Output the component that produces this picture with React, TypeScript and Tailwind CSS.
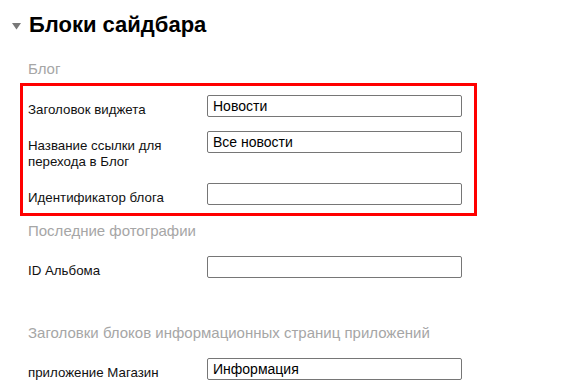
import React from "react";

const font = { fontFamily: '"Liberation Sans", Arial, sans-serif' };

function Row({
  label,
  value,
  className = "",
}: {
  label: React.ReactNode;
  value: string;
  className?: string;
}) {
  return (
    <div className={"flex items-start " + className}>
      <div className="w-[179px] shrink-0 pt-[7px] text-[13.3px] leading-4 text-[#111]">
        {label}
      </div>
      <div className="w-[255px] h-[22px] border border-[#767676] rounded-[2px] px-[5px] flex items-center text-[14px] text-black leading-none">
        {value}
      </div>
    </div>
  );
}

export default function App() {
  return (
    <div
      className="w-[582px] h-[386px] overflow-hidden bg-white relative"
      style={font}
    >
      <div className="flex items-center pt-[12px] pl-[12px]">
        <svg width="9" height="7" viewBox="0 0 9 7" className="mr-[8px] mt-[2px]">
          <polygon points="0,0 9,0 4.5,6.5" fill="#787878" />
        </svg>
        <h1 className="text-[22px] font-bold leading-[26px] text-black">
          Блоки сайдбара
        </h1>
      </div>

      <div className="pl-[28px] mt-[22px] text-[15px] leading-[18px] text-[#a6a6a6]">
        Блог
      </div>

      <div className="ml-[20px] mt-[5px] w-[457px] border-[3px] border-[#ff0000] pl-[5px] pt-[9px] pb-[7px] flex flex-col gap-[13px]">
        <Row label="Заголовок виджета" value="Новости" />
        <Row
          label={
            <>
              Название ссылки для
              <br />
              перехода в Блог
            </>
          }
          value="Все новости"
        />
        <Row label="Идентификатор блога" value="" />
      </div>

      <div className="pl-[28px] mt-[6px] text-[15px] leading-[18px] text-[#a6a6a6]">
        Последние фотографии
      </div>
      <div className="pl-[28px] mt-[16px]">
        <Row label="ID Альбома" value="" />
      </div>

      <div className="pl-[28px] mt-[45px] text-[15px] leading-[18px] text-[#a6a6a6]">
        Заголовки блоков информационных страниц приложений
      </div>
      <div className="pl-[28px] mt-[16px]">
        <Row label="приложение Магазин" value="Информация" />
      </div>
    </div>
  );
}
